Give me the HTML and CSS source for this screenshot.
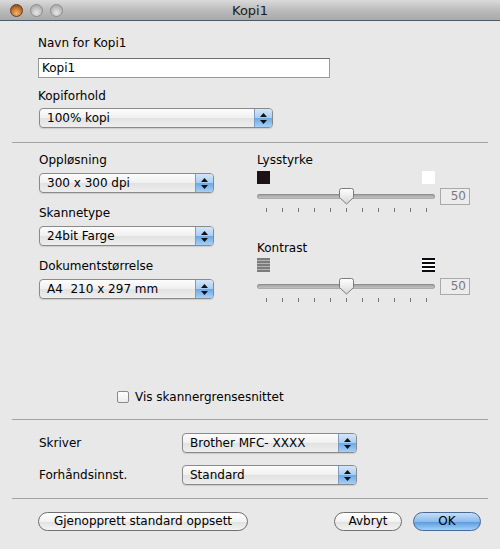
FILE: index.html
```html
<!DOCTYPE html>
<html lang="no">
<head>
  <meta charset="UTF-8" />
  <title>Kopi1</title>
  <link rel="stylesheet" href="styles.css">
</head>
<body>
  <div class="titlebar">
    <div class="lights">
      <span class="light close"></span>
      <span class="light"></span>
      <span class="light"></span>
    </div>
    <div class="title">Kopi1</div>
    <div></div>
  </div>

  <div class="top">
    <div class="label">Navn for Kopi1</div>
    <div class="field">Kopi1</div>
    <div class="label gap">Kopiforhold</div>
    <div class="popup ratio">
      <span class="popup-text">100% kopi</span>
      <span class="arrows"><svg width="7" height="11" viewBox="0 0 7 11"><path d="M3.5 0 L7 4 H0 Z M0 7 H7 L3.5 11 Z" fill="#111"/></svg></span>
    </div>
  </div>

  <div class="sep"></div>

  <div class="middle">
    <div class="columns">
      <div class="col">
        <div class="label">Oppløsning</div>
        <div class="popup">
          <span class="popup-text">300 x 300 dpi</span>
          <span class="arrows"><svg width="7" height="11" viewBox="0 0 7 11"><path d="M3.5 0 L7 4 H0 Z M0 7 H7 L3.5 11 Z" fill="#111"/></svg></span>
        </div>
        <div class="label group">Skannetype</div>
        <div class="popup">
          <span class="popup-text">24bit Farge</span>
          <span class="arrows"><svg width="7" height="11" viewBox="0 0 7 11"><path d="M3.5 0 L7 4 H0 Z M0 7 H7 L3.5 11 Z" fill="#111"/></svg></span>
        </div>
        <div class="label group">Dokumentstørrelse</div>
        <div class="popup">
          <span class="popup-text">A4&nbsp; 210 x 297 mm</span>
          <span class="arrows"><svg width="7" height="11" viewBox="0 0 7 11"><path d="M3.5 0 L7 4 H0 Z M0 7 H7 L3.5 11 Z" fill="#111"/></svg></span>
        </div>
      </div>

      <div class="col">
        <div class="label">Lysstyrke</div>
        <div class="swatches">
          <span class="swatch dark"></span>
          <span class="swatch light-sw"></span>
        </div>
        <div class="slider-row">
          <div class="track">
            <svg class="knob" width="15" height="17" viewBox="0 0 15 17">
              <defs><linearGradient id="kg1" x1="0" y1="0" x2="0" y2="1"><stop offset="0" stop-color="#ffffff"/><stop offset="1" stop-color="#d8d8d8"/></linearGradient></defs>
              <path d="M2.5 0.5 H12.5 A2 2 0 0 1 14.5 2.5 V9.5 L7.5 16 L0.5 9.5 V2.5 A2 2 0 0 1 2.5 0.5 Z" fill="url(#kg1)" stroke="#7a7a7a"/>
            </svg>
          </div>
          <div class="num">50</div>
        </div>
        <div class="ticks">
          <i></i><i></i><i></i><i></i><i></i><i></i><i></i><i></i><i></i><i></i><i></i>
        </div>

        <div class="label contrast">Kontrast</div>
        <div class="swatches low">
          <span class="swatch grey-lines"></span>
          <span class="swatch black-lines"></span>
        </div>
        <div class="slider-row second">
          <div class="track">
            <svg class="knob" width="15" height="17" viewBox="0 0 15 17">
              <defs><linearGradient id="kg2" x1="0" y1="0" x2="0" y2="1"><stop offset="0" stop-color="#ffffff"/><stop offset="1" stop-color="#d8d8d8"/></linearGradient></defs>
              <path d="M2.5 0.5 H12.5 A2 2 0 0 1 14.5 2.5 V9.5 L7.5 16 L0.5 9.5 V2.5 A2 2 0 0 1 2.5 0.5 Z" fill="url(#kg2)" stroke="#7a7a7a"/>
            </svg>
          </div>
          <div class="num">50</div>
        </div>
        <div class="ticks">
          <i></i><i></i><i></i><i></i><i></i><i></i><i></i><i></i><i></i><i></i><i></i>
        </div>
      </div>
    </div>

    <div class="check-row">
      <span class="checkbox"></span>
      <span>Vis skannergrensesnittet</span>
    </div>
  </div>

  <div class="sep"></div>

  <div class="printer">
    <div class="row-label">Skriver</div>
    <div class="popup">
      <span class="popup-text">Brother MFC- XXXX</span>
      <span class="arrows"><svg width="7" height="11" viewBox="0 0 7 11"><path d="M3.5 0 L7 4 H0 Z M0 7 H7 L3.5 11 Z" fill="#111"/></svg></span>
    </div>
    <div class="row-label">Forhåndsinnst.</div>
    <div class="popup">
      <span class="popup-text">Standard</span>
      <span class="arrows"><svg width="7" height="11" viewBox="0 0 7 11"><path d="M3.5 0 L7 4 H0 Z M0 7 H7 L3.5 11 Z" fill="#111"/></svg></span>
    </div>
  </div>

  <div class="sep"></div>

  <div class="buttons">
    <div class="btn reset">Gjenopprett standard oppsett</div>
    <div class="btn cancel">Avbryt</div>
    <div class="btn ok">OK</div>
  </div>
</body>
</html>
```

FILE: styles.css
```css
body {
  margin: 0;
  width: 500px;
  height: 549px;
  background: #e8e8e8;
  font-family: "DejaVu Sans", sans-serif;
  font-size: 12px;
  color: #000;
  overflow: hidden;
}
.titlebar {
  display: grid;
  grid-template-columns: 1fr auto 1fr;
  align-items: center;
  height: 20px;
  border-bottom: 1px solid #4d5a6a;
  background: linear-gradient(#dadada, #bcbcbc 50%, #a9a9a9);
}
.lights {
  display: flex;
  gap: 7px;
  padding-left: 10px;
}
.light {
  width: 13px;
  height: 13px;
  border-radius: 50%;
  box-sizing: border-box;
  border: 1px solid #8d8d8d;
  background: radial-gradient(circle at 50% 70%, #e8e8e8, #b9b9b9 60%, #a0a0a0);
}
.light.close {
  border-color: #6b3a1a;
  background: radial-gradient(circle at 50% 75%, #f2b46d, #c0702e 55%, #6e3814);
}
.title {
  font-size: 13px;
  color: #1a1a1a;
}
.label {
  height: 16px;
  line-height: 16px;
}
.top {
  padding: 14px 0 14px 38px;
}
.field {
  width: 292px;
  height: 20px;
  box-sizing: border-box;
  margin-top: 7px;
  padding-left: 3px;
  line-height: 18px;
  background: #fff;
  border: 1px solid #9a9a9a;
  border-top-color: #6e6e6e;
}
.gap {
  margin-top: 10px;
}
.popup {
  display: flex;
  width: 175px;
  height: 20px;
  box-sizing: border-box;
  margin-top: 5px;
  border: 1px solid #8a8a8a;
  border-radius: 4px;
  overflow: hidden;
  background: linear-gradient(#fcfcfc, #f0f0f0 50%, #e2e2e2 52%, #eeeeee);
  box-shadow: 0 1px 1px rgba(0, 0, 0, 0.12);
}
.popup.ratio {
  width: 234px;
  margin: 4px 0 0 1px;
}
.popup-text {
  flex: 1;
  padding-left: 7px;
  line-height: 18px;
  white-space: nowrap;
}
.arrows {
  width: 17px;
  display: flex;
  align-items: center;
  justify-content: center;
  border-left: 1px solid #7d9cc2;
  background: linear-gradient(#d4e6f8, #a9cdf1 50%, #6ea8e6 52%, #a6d0f6);
}
.sep {
  height: 1px;
  margin: 0 12px;
  background: #a3a3a3;
}
.middle {
  display: flex;
  flex-direction: column;
  height: 276px;
  box-sizing: border-box;
  padding: 9px 0 14px;
}
.columns {
  display: grid;
  grid-template-columns: 175px 213px;
  column-gap: 43px;
  padding-left: 39px;
}
.group {
  margin-top: 12px;
}
.swatches {
  display: flex;
  justify-content: space-between;
  width: 178px;
  margin-top: 3px;
}
.swatches.low {
  margin-top: 2px;
}
.swatch {
  width: 13px;
  height: 13px;
}
.swatch.dark {
  background: #1c1218;
}
.swatch.light-sw {
  background: #fff;
}
.swatch.grey-lines {
  height: 14px;
  background: repeating-linear-gradient(#7c7c7c 0 2px, #b4b4b4 2px 3px);
}
.swatch.black-lines {
  height: 14px;
  background: repeating-linear-gradient(#0b0b14 0 2px, #fff 2px 4px);
}
.slider-row {
  display: flex;
  align-items: center;
  gap: 5px;
  margin-top: 4px;
}
.slider-row.second {
  margin-top: 6px;
}
.track {
  position: relative;
  width: 178px;
  height: 5px;
  border-radius: 3px;
  background: linear-gradient(#9d9d9d, #c9c9c9);
  box-shadow: inset 0 0 0 1px rgba(0, 0, 0, 0.12);
}
.knob {
  position: absolute;
  left: 82px;
  top: -6px;
}
.num {
  width: 30px;
  height: 17px;
  box-sizing: border-box;
  padding-right: 3px;
  text-align: right;
  line-height: 15px;
  color: #7a7a7a;
  background: #ececec;
  border: 1px solid #a9a9a9;
}
.ticks {
  display: flex;
  justify-content: space-between;
  width: 161px;
  margin: 3px 0 0 9px;
}
.ticks i {
  width: 1px;
  height: 4px;
  background: #777;
}
.contrast {
  margin-top: 28px;
}
.check-row {
  display: flex;
  align-items: center;
  gap: 6px;
  height: 16px;
  margin-top: auto;
  padding-left: 117px;
}
.checkbox {
  width: 12px;
  height: 12px;
  box-sizing: border-box;
  border: 1px solid #8a8a8a;
  border-radius: 2px;
  background: linear-gradient(#fff, #ececec);
}
.printer {
  display: grid;
  grid-template-columns: 143px 175px;
  row-gap: 12px;
  align-items: center;
  padding: 13px 0 13px 39px;
}
.printer .popup {
  margin-top: 0;
}
.buttons {
  display: flex;
  gap: 11px;
  padding: 13px 19px 0 38px;
}
.btn {
  height: 19px;
  box-sizing: border-box;
  border: 1px solid #6f6f6f;
  border-radius: 10px;
  text-align: center;
  line-height: 17px;
  background: linear-gradient(#ffffff, #f2f2f2 50%, #e1e1e1 52%, #f4f4f4);
}
.btn.reset {
  width: 210px;
  margin-right: auto;
}
.btn.cancel,
.btn.ok {
  width: 68px;
}
.btn.ok {
  border-color: #46699a;
  background: linear-gradient(#c6ddf5, #8cbcec 50%, #5b9ae0 52%, #9fd0f8);
}
```
